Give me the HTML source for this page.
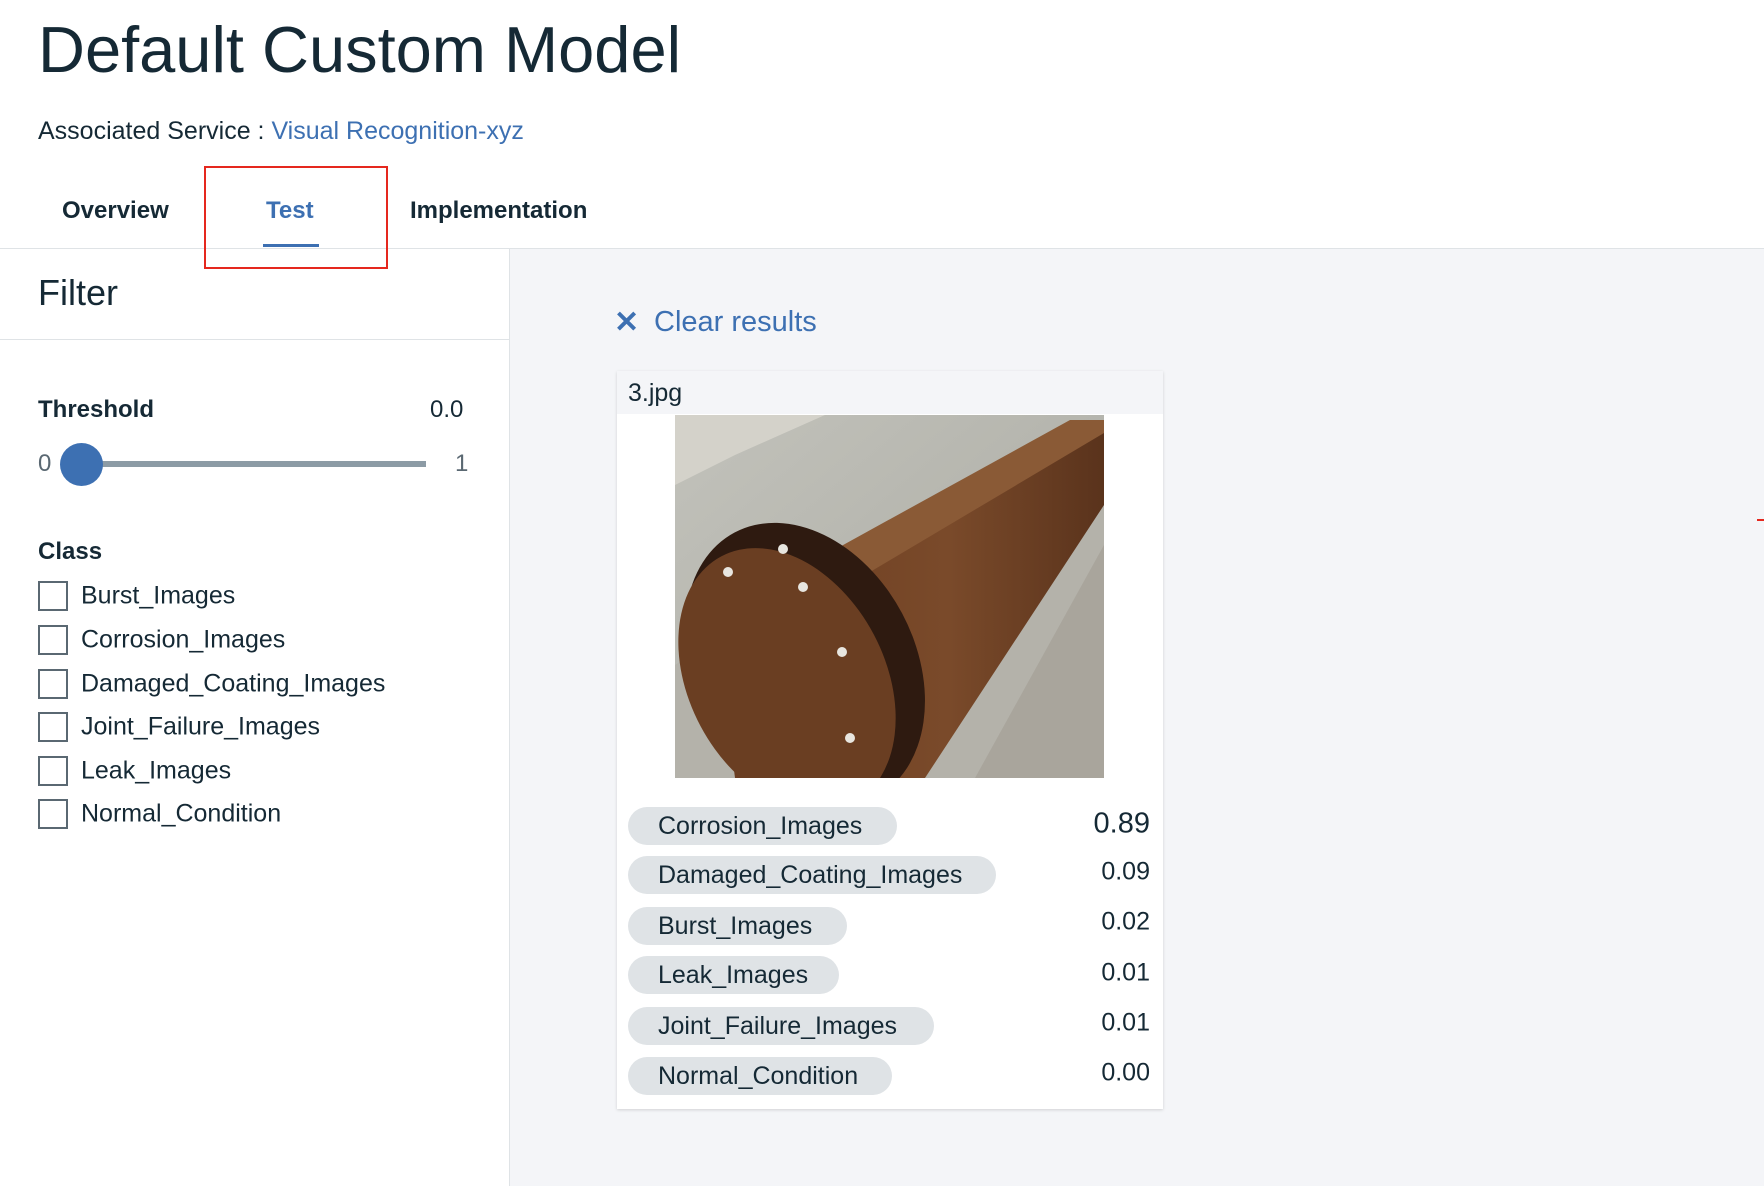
<!DOCTYPE html>
<html><head><meta charset="utf-8"><style>
*{margin:0;padding:0;box-sizing:border-box}
body{width:1764px;height:1186px;overflow:hidden;background:#fff;font-family:"Liberation Sans",sans-serif;color:#152935;position:relative}
.a{position:absolute;white-space:nowrap}
.cb{position:absolute;left:38px;width:30px;height:30px;border:2px solid #5a6872;background:#fff}
.lbl{position:absolute;left:81px;font-size:25px;color:#152935;transform:translateY(-50%)}
.pill{position:absolute;left:628px;height:38px;border-radius:19px;background:#dfe3e6;font-size:25px;line-height:38px;padding-left:30px;transform:translateY(-50%)}
.val{position:absolute;right:614px;font-size:25px;transform:translateY(-50%)}
</style></head><body>
<div class="a" style="left:38px;top:12px;font-size:65px;color:#152935">Default Custom Model</div>
<div class="a" style="left:38px;top:117px;font-size:25px">Associated Service : <span style="color:#3d70b2">Visual Recognition-xyz</span></div>
<div class="a" style="left:62px;top:197px;font-size:24px;font-weight:bold">Overview</div>
<div class="a" style="left:266px;top:197px;font-size:24px;font-weight:bold;color:#3d70b2">Test</div>
<div class="a" style="left:410px;top:197px;font-size:24px;font-weight:bold">Implementation</div>
<div class="a" style="left:263px;top:244px;width:56px;height:3px;background:#3d70b2"></div>
<div class="a" style="left:0;top:248px;width:1764px;height:1px;background:#dfe3e6"></div>
<div class="a" style="left:204px;top:166px;width:184px;height:103px;border:2px solid #e5281e"></div>
<div class="a" style="left:509px;top:249px;width:1255px;height:937px;background:#f4f5f8;border-left:1px solid #dfe3e6"></div>
<div class="a" style="left:38px;top:272px;font-size:36px;font-weight:300">Filter</div>
<div class="a" style="left:0;top:339px;width:509px;height:1px;background:#dfe3e6"></div>
<div class="a" style="left:38px;top:396px;font-size:24px;font-weight:bold">Threshold</div>
<div class="a" style="left:430px;top:396px;font-size:24px">0.0</div>
<div class="a" style="left:38px;top:450px;font-size:24px;color:#5a6872">0</div>
<div class="a" style="left:455px;top:450px;font-size:24px;color:#5a6872">1</div>
<div class="a" style="left:81px;top:461px;width:345px;height:6px;background:#8c9ba5"></div>
<div class="a" style="left:60px;top:443px;width:43px;height:43px;border-radius:50%;background:#3d70b2"></div>
<div class="a" style="left:38px;top:538px;font-size:24px;font-weight:bold">Class</div>
<div class="cb" style="top:581px"></div><div class="lbl" style="top:596px">Burst_Images</div>
<div class="cb" style="top:625px"></div><div class="lbl" style="top:640px">Corrosion_Images</div>
<div class="cb" style="top:669px"></div><div class="lbl" style="top:684px">Damaged_Coating_Images</div>
<div class="cb" style="top:712px"></div><div class="lbl" style="top:727px">Joint_Failure_Images</div>
<div class="cb" style="top:756px"></div><div class="lbl" style="top:771px">Leak_Images</div>
<div class="cb" style="top:799px"></div><div class="lbl" style="top:814px">Normal_Condition</div>
<div class="a" style="left:614px;top:305px;font-size:30px;color:#3d70b2;font-weight:bold">✕</div>
<div class="a" style="left:654px;top:306px;font-size:29px;color:#3d70b2">Clear results</div>
<div class="a" style="left:617px;top:371px;width:546px;height:738px;background:#fff;box-shadow:0 1px 3px rgba(0,0,0,.15)"></div>
<div class="a" style="left:617px;top:371px;width:546px;height:43px;background:#f4f5f8"></div>
<div class="a" style="left:628px;top:379px;font-size:25px">3.jpg</div>
<svg class="a" style="left:675px;top:415px" width="429" height="363" viewBox="0 0 429 363">
<defs><linearGradient id="r" x1="0" y1="0" x2="1" y2="0"><stop offset="0" stop-color="#6a3c20"/><stop offset="0.6" stop-color="#7a4a2a"/><stop offset="1" stop-color="#5a331c"/></linearGradient>
<linearGradient id="s" x1="0" y1="0" x2="1" y2="1"><stop offset="0" stop-color="#c2c2bb"/><stop offset="1" stop-color="#a8a8a0"/></linearGradient></defs>
<rect width="429" height="363" fill="url(#s)"/>
<path d="M0 0H150L60 40L0 70Z" fill="#d4d2ca"/>
<path d="M0 250L200 120L429 20V363H0Z" fill="#b4b2aa"/>
<path d="M300 363L429 130V363Z" fill="#a9a59c"/>
<path d="M40 200L400 5H429V90L250 363H60Z" fill="url(#r)"/>
<path d="M150 140L395 5H429V18L190 160Z" fill="#8a5a36"/>
<ellipse cx="130" cy="250" rx="110" ry="150" transform="rotate(-28 130 250)" fill="#2e1a10"/>
<ellipse cx="112" cy="265" rx="98" ry="140" transform="rotate(-28 112 265)" fill="#6a3e22"/>
<path d="M0 200L120 135L0 363Z" fill="#6a3e22" opacity="0"/>
<g fill="#e8e6e0"><circle cx="53" cy="157" r="5"/><circle cx="108" cy="134" r="5"/><circle cx="128" cy="172" r="5"/><circle cx="167" cy="237" r="5"/><circle cx="175" cy="323" r="5"/></g>
</svg>
<div class="pill" style="top:826px;width:269px">Corrosion_Images</div><div class="val" style="top:824px;font-size:29px">0.89</div>
<div class="pill" style="top:875px;width:368px">Damaged_Coating_Images</div><div class="val" style="top:872px">0.09</div>
<div class="pill" style="top:926px;width:219px">Burst_Images</div><div class="val" style="top:922px">0.02</div>
<div class="pill" style="top:975px;width:211px">Leak_Images</div><div class="val" style="top:973px">0.01</div>
<div class="pill" style="top:1026px;width:306px">Joint_Failure_Images</div><div class="val" style="top:1023px">0.01</div>
<div class="pill" style="top:1076px;width:264px">Normal_Condition</div><div class="val" style="top:1073px">0.00</div>
<div class="a" style="left:1757px;top:519px;width:7px;height:2px;background:#e5281e"></div>
</body></html>
